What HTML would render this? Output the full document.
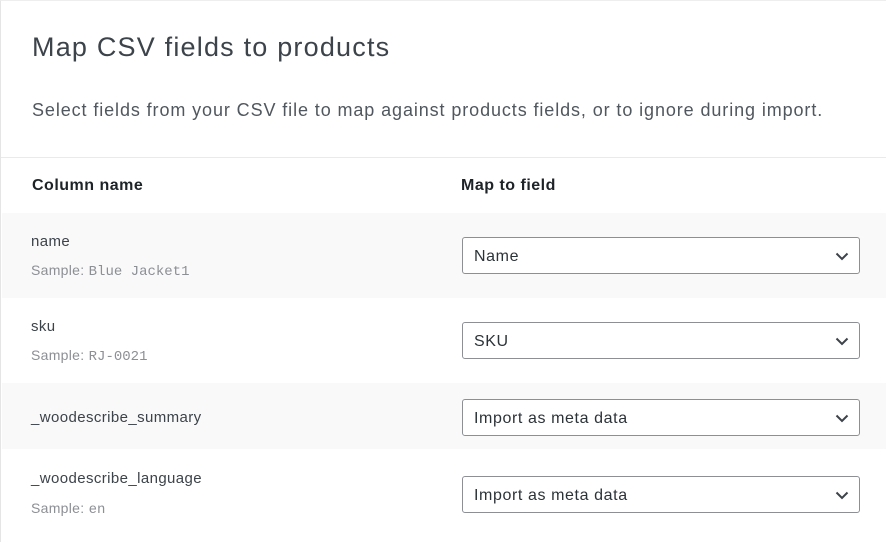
<!DOCTYPE html><html><head><style>
body{margin:0;width:886px;height:542px;overflow:hidden;background:#fff;font-family:"Liberation Sans",sans-serif;color:#2c3338}
.wrap{position:absolute;left:0;top:0;width:886px;height:542px;border-left:1px solid #e5e5e5;border-top:1px solid #eee;box-sizing:border-box}
.t{position:absolute;left:31px;top:31px;font-size:27px;letter-spacing:1.2px;color:#3c434a}
.s{position:absolute;left:31px;top:99px;font-size:18px;letter-spacing:0.9px;color:#50575e}
.hr{position:absolute;left:0;top:156px;width:886px;height:1px;background:#eaeaea}
.h{position:absolute;top:176px;font-size:16px;font-weight:bold;letter-spacing:0.5px;color:#1d2327}
.row{position:absolute;left:1px;width:885px}
.g{background:#f9f9f9}
.n{position:absolute;left:30px;font-size:15px;letter-spacing:0.4px;color:#3c434a}
.sm{position:absolute;left:30px;font-size:14px;letter-spacing:0.3px;color:#8c8f94}
.sm code{font-family:"Liberation Mono",monospace;font-size:14px;letter-spacing:0}
.sel{position:absolute;left:461px;width:398px;height:37px;border:1px solid #8c8f94;border-radius:3px;background:#fff;box-sizing:border-box;font-size:16px;letter-spacing:0.6px;line-height:37px;padding-left:11px;color:#2c3338}
.sel svg{position:absolute;right:10px;top:14px}
</style></head><body><div class="wrap">
<div class="t">Map CSV fields to products</div>
<div class="s">Select fields from your CSV file to map against products fields, or to ignore during import.</div>
<div class="hr"></div>
<div class="h" style="left:31px">Column name</div>
<div class="h" style="left:460px">Map to field</div>
<div class="row g" style="top:212px;height:85px"></div>
<div class="row g" style="top:382px;height:66px"></div>
<div class="n" style="top:232px">name</div><div class="sm" style="top:261px">Sample: <code>Blue Jacket1</code></div>
<div class="n" style="top:317px">sku</div><div class="sm" style="top:346px">Sample: <code>RJ-0021</code></div>
<div class="n" style="top:408px">_woodescribe_summary</div>
<div class="n" style="top:469px">_woodescribe_language</div><div class="sm" style="top:499px">Sample: <code>en</code></div>
<div class="sel" style="top:236px">Name<svg width="14" height="9"><path d="M1.5 1.5L7 7L12.5 1.5" stroke="#3c434a" stroke-width="2" fill="none"/></svg></div>
<div class="sel" style="top:321px">SKU<svg width="14" height="9"><path d="M1.5 1.5L7 7L12.5 1.5" stroke="#3c434a" stroke-width="2" fill="none"/></svg></div>
<div class="sel" style="top:398px">Import as meta data<svg width="14" height="9"><path d="M1.5 1.5L7 7L12.5 1.5" stroke="#3c434a" stroke-width="2" fill="none"/></svg></div>
<div class="sel" style="top:475px">Import as meta data<svg width="14" height="9"><path d="M1.5 1.5L7 7L12.5 1.5" stroke="#3c434a" stroke-width="2" fill="none"/></svg></div>
</div></body></html>
